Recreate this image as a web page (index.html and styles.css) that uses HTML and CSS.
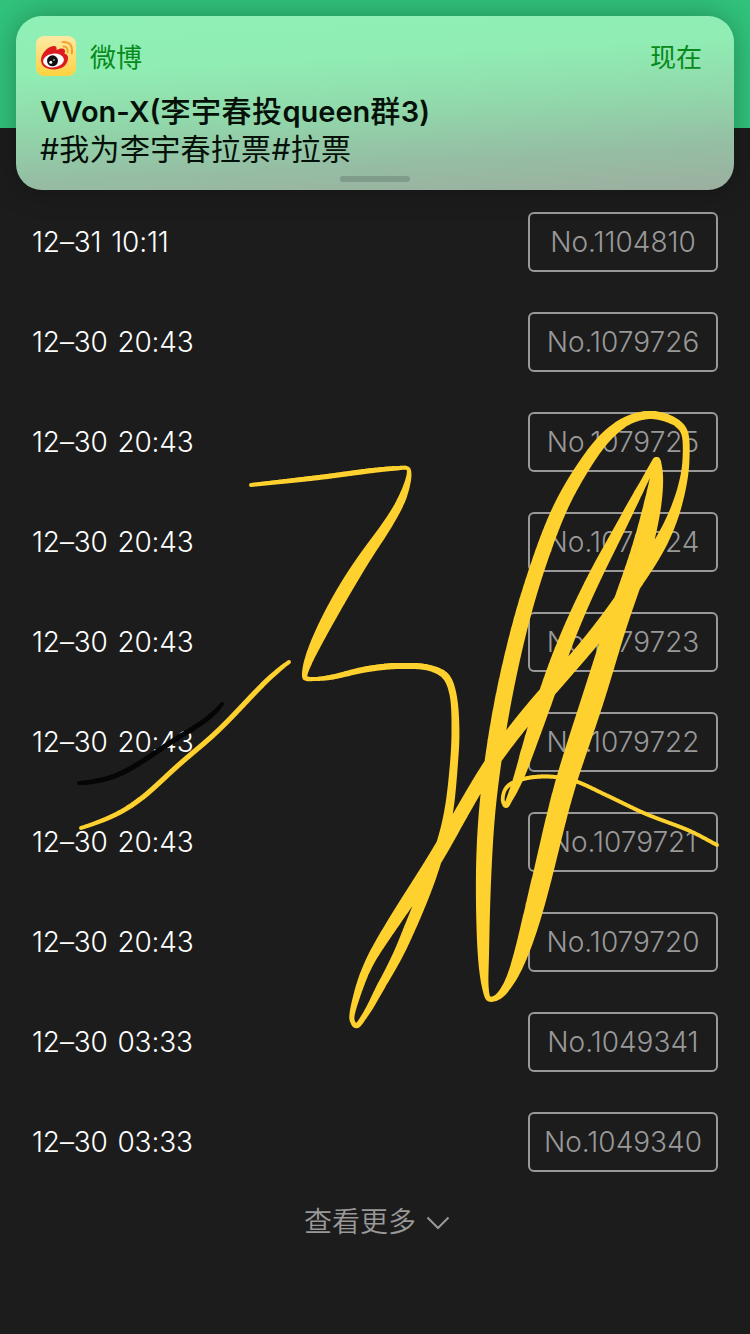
FILE: index.html
```html
<!DOCTYPE html>
<html lang="zh-CN">
<head>
  <meta charset="UTF-8">
  <title>投票记录</title>
  <link rel="stylesheet" href="styles.css">
</head>
<body>

  <div class="header"></div>

  <!-- 记录列表 -->
  <div class="content">
    <ul class="list">
      <li class="row"><span class="time">12–31 10:11</span><span class="number">No.1104810</span></li>
      <li class="row"><span class="time">12–30 20:43</span><span class="number">No.1079726</span></li>
      <li class="row"><span class="time">12–30 20:43</span><span class="number">No.1079725</span></li>
      <li class="row"><span class="time">12–30 20:43</span><span class="number">No.1079724</span></li>
      <li class="row"><span class="time">12–30 20:43</span><span class="number">No.1079723</span></li>
      <li class="row"><span class="time">12–30 20:43</span><span class="number">No.1079722</span></li>
      <li class="row"><span class="time">12–30 20:43</span><span class="number">No.1079721</span></li>
      <li class="row"><span class="time">12–30 20:43</span><span class="number">No.1079720</span></li>
      <li class="row"><span class="time">12–30 03:33</span><span class="number">No.1049341</span></li>
      <li class="row"><span class="time">12–30 03:33</span><span class="number">No.1049340</span></li>
    </ul>
    <div class="more">
      <span>查看更多</span>
      <svg class="arrow" width="24" height="14" viewBox="0 0 24 14">
        <path d="M1.5 1.5 L12 12 L22.5 1.5" fill="none" stroke="#999" stroke-width="2"/>
      </svg>
    </div>
  </div>

  <!-- 通知横幅 -->
  <div class="notice">
    <div class="notice-top">
      <svg class="logo" width="40" height="40" viewBox="0 0 40 40">
        <defs>
          <linearGradient id="logo-bg" x1="0" y1="0" x2="0" y2="1">
            <stop offset="0" stop-color="#fde9a6"/>
            <stop offset="1" stop-color="#fdd23f"/>
          </linearGradient>
        </defs>
        <rect width="40" height="40" rx="8" fill="url(#logo-bg)"/>
        <path d="M5 24 C5 18 11 11 17 10 C20 9.500 21 11 20.500 14 C24 12 29 11.500 29 15 C29 16 28.500 17 28.500 17.500 C31 18.500 32.500 20 32 23 C31 30 25 33.500 17.500 33.500 C10 33.500 5 30 5 24 Z" fill="#dc1c20"/>
        <ellipse cx="17.500" cy="24.500" rx="10.500" ry="6.800" fill="#fff" transform="rotate(-7 17.500 24.500)"/>
        <circle cx="16.500" cy="24.800" r="5.500" fill="#111"/>
        <circle cx="14.800" cy="26.200" r="1.500" fill="#fff"/>
        <circle cx="18" cy="24" r=".8" fill="#fff"/>
        <path d="M27.500 10.500 Q32.500 10.500 31.500 16.500" fill="none" stroke="#f6a02c" stroke-width="1.800" stroke-linecap="round"/>
        <path d="M26.500 6 Q37.500 5.500 35.800 17.500" fill="none" stroke="#f6a02c" stroke-width="2" stroke-linecap="round"/>
      </svg>
      <span class="app">微博</span>
      <span class="now">现在</span>
    </div>
    <div class="notice-title">VVon-X(<span class="han">李宇春投</span>queen<span class="han">群</span>3)</div>
    <div class="notice-text">#我为李宇春拉票#拉票</div>
    <div class="grip"></div>
  </div>

  <!-- 涂鸦层 -->
  <canvas class="doodle" id="doodle" width="750" height="1334"></canvas>

  <script src="doodle.js"></script>
</body>
</html>
```

FILE: styles.css
```css
body {
  margin: 0;
  position: relative;
  width: 750px;
  height: 1334px;
  overflow: hidden;
  background: #1c1c1c;
  font-family: Inter, "Noto Sans CJK SC", sans-serif;
}

.header {
  height: 128px;
  background: #31c37c;
}

.content {
  padding: 64px 32px 0;
}

.list {
  margin: 0;
  padding: 0;
  list-style: none;
}

.row {
  display: flex;
  justify-content: space-between;
  align-items: center;
  height: 100px;
}

.time {
  font-size: 28px;
  font-weight: 360;
  line-height: 40px;
  letter-spacing: -0.15px;
  word-spacing: 2px;
  color: #fff;
}

.number {
  box-sizing: border-box;
  width: 190px;
  height: 60px;
  border: 2px solid #999;
  border-radius: 6px;
  font-size: 28px;
  font-weight: 320;
  line-height: 57px;
  text-align: center;
  color: #999;
}

.more {
  display: flex;
  justify-content: center;
  align-items: center;
  gap: 10px;
  height: 60px;
  padding-left: 4px;
  font-size: 28px;
  font-weight: 350;
  line-height: 40px;
  color: #999;
}

.arrow {
  margin-top: 2px;
}

/* 通知横幅 */
.notice {
  position: absolute;
  top: 16px;
  left: 16px;
  box-sizing: border-box;
  width: 718px;
  height: 174px;
  padding: 20px 32px 0 20px;
  border-radius: 26px;
  background: linear-gradient(177deg, #8ff0b5 0%, #90edb3 28%, #91d9ab 52%, #95bea4 78%, #9caf9f 100%);
  box-shadow: 0 0 30px rgba(0, 0, 0, 0.3);
}

.notice-top {
  display: flex;
  align-items: center;
  height: 40px;
  font-size: 26px;
  color: #078a1c;
}

.app,
.now {
  margin-top: -2px;
}

.app {
  margin-left: 14px;
}

.now {
  margin-left: auto;
}

.notice-title {
  margin: 16px 0 0 4px;
  font-size: 29px;
  font-weight: 600;
  line-height: 38px;
  color: #041008;
}

.han {
  font-size: 30px;
  font-weight: 500;
  letter-spacing: 0.5px;
}

.notice-text {
  margin: 0 0 0 4px;
  font-size: 30px;
  line-height: 37px;
  letter-spacing: 0.3px;
  color: #041008;
}

.grip {
  position: absolute;
  left: 324px;
  bottom: 8px;
  width: 70px;
  height: 6px;
  border-radius: 3px;
  background: #7f9b89;
}

.doodle {
  position: absolute;
  top: 0;
  left: 0;
  pointer-events: none;
}
```

FILE: doodle.js
```javascript
const ctx = document.getElementById("doodle").getContext("2d");

// [x, y, grosor]
const black = [
  [79,783,4],[95,782,5],[115,777,5],[140,763,5],[165,746,5],[190,730,5],[208,720,5],[222,704,4]
];

const yellowShort = [
  [81,828,4],[105,820,4.5],[131,807,5],[155,787,5],[178,765,5],[215,734,5],[245,703,5],[272,675,5],[289,662,4]
];

const yellowLong = [
  [251,485,4],[315,478,5],[373,470.5,5],[395,468.5,4.5],[408,468.5,4],[409,475,5],[402,499,8],[386,527,10],
  [367,554,12],[346,587,14],[326,623,13],[311,654,10],[305,672,6],[305,678,5],[315,679,4],[330,677.5,5],
  [365,669.5,6],[398,666,6],[430,668,6],[446,676,7],[453,694,7],[455.5,732,8],[454,763,8],[449,810,9],
  [442,842,10],[430,878,12],[414,918,12],[397,957,10],[380,988,8],[367,1012,6],[356,1026,5],[352,1020,5],
  [357,995,7],[369,963,9],[390,928,12],[413,893,14],[434,861,15],[458,819,14],[488,768,14],[517,728,15],
  [549,690,15],[583,651,15],[612,615,16],[634,583,16],[657,550,14],[673,517,11],[683,483,8],[686,460,7],
  [685,433,7],[681,426,7],[669,418.5,8],[650,414.5,8],[629,419.5,9],[609,433,11],[594.5,450,12],[583,467,13],
  [563.5,500,14],[549.5,533,15],[537.5,567,15],[527,600,15.5],[518,633,16],[510,667,16.5],[503,700,17],[497,734,17],
  [492,768,17],[487,810,16.5],[484,860,16],[483,910,14],[483.5,960,11],[485,985,7],[489,999,5],[498,997,6],
  [511,980,10],[523,949,15],[534,910,19],[549.5,847,20],[565,783,21],[582,733,22],[593,700,23],[603,667,22],
  [613.5,633,21],[624,600,21],[631.5,583,21],[638.5,562,21],[647,533,20],[654,500,18],[658,472,13],[658,463,8],
  [657,458.5,6],[653,465,6],[643,484,7],[634.5,500,9],[617.5,533,11],[599.5,567,13],[583.5,600,14],[569,633,15],
  [557,664,16],[544,702,16],[531,740,14],[518,780,10],[509,800,6],[506,806,5],[503,802,4],[504,792,4],
  [509,785,4],[520,780,4],[535,777,4],[555,777,4],[575,781,4],[606,795,4],[645,813.5,4],[690,831,4],[717,845,4]
];

// curva Catmull-Rom centrípeta entre b y c
function pointAt(a, b, c, d, u) {
  const step = (p, q) => Math.sqrt(Math.hypot(q[0] - p[0], q[1] - p[1])) || 0.01;
  const t0 = 0;
  const t1 = t0 + step(a, b);
  const t2 = t1 + step(b, c);
  const t3 = t2 + step(c, d);
  const t = t1 + (t2 - t1) * u;
  const mix = (p, q, s, e) => p.map((v, k) => (v * (e - t) + q[k] * (t - s)) / (e - s));
  const ab = mix(a, b, t0, t1);
  const bc = mix(b, c, t1, t2);
  const cd = mix(c, d, t2, t3);
  return mix(mix(ab, bc, t0, t2), mix(bc, cd, t1, t3), t1, t2);
}

function samplePoints(points) {
  const samples = [];
  for (let i = 0; i < points.length - 1; i++) {
    const b = points[i];
    const c = points[i + 1];
    const a = points[i - 1] || [2 * b[0] - c[0], 2 * b[1] - c[1], b[2]];
    const d = points[i + 2] || [2 * c[0] - b[0], 2 * c[1] - b[1], c[2]];
    const steps = Math.ceil(Math.hypot(c[0] - b[0], c[1] - b[1]) * 2);
    for (let j = 0; j < steps; j++) {
      samples.push(pointAt(a, b, c, d, j / steps));
    }
  }
  samples.push(points[points.length - 1]);
  return samples;
}

// media móvil: los tramos gruesos se suavizan más que las esquinas finas
function smooth(samples, radius) {
  return samples.map((p, i) => {
    const r = Math.min(Math.round(radius(p)), i, samples.length - 1 - i);
    const sum = [0, 0, 0];
    for (let j = i - r; j <= i + r; j++) {
      sum.forEach((v, k) => sum[k] = v + samples[j][k]);
    }
    return sum.map(v => v / (2 * r + 1));
  });
}

function drawStroke(points, color, radius) {
  ctx.fillStyle = color;
  ctx.beginPath();
  let samples = smooth(samplePoints(points), radius);
  samples = smooth(samples, radius);
  samples.forEach(([x, y, w]) => {
    ctx.moveTo(x + w / 2, y);
    ctx.arc(x, y, w / 2, 0, Math.PI * 2);
  });
  ctx.fill();
}

drawStroke(black, "#050505", () => 32);
drawStroke(yellowShort, "#ffd12e", () => 36);
drawStroke(yellowLong, "#ffd12e", p => 3 + Math.max(0, p[2] - 5) * 4);
```
